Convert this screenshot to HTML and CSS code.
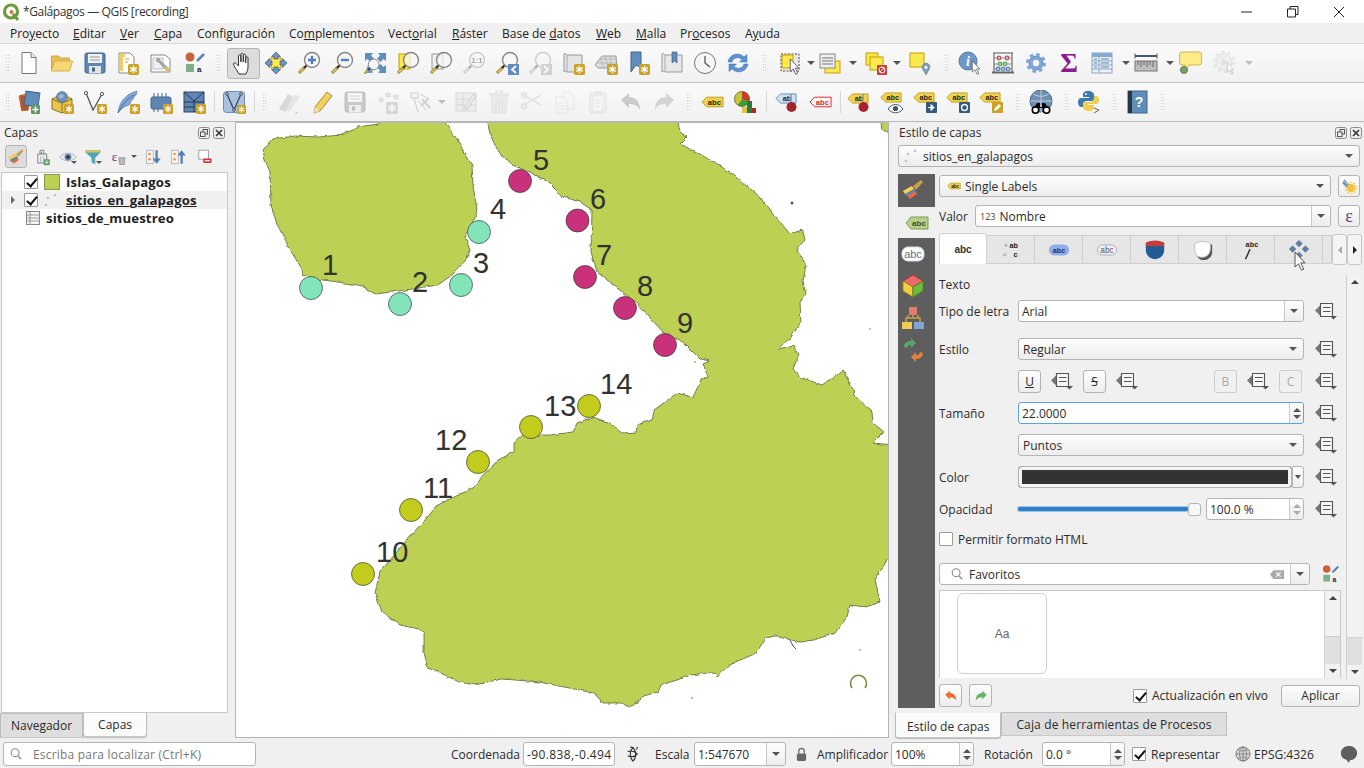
FILE: index.html
```html
<!DOCTYPE html>
<html>

<head>
  <meta charset="UTF-8">
  <title>*Galápagos — QGIS [recording]</title>
  <link rel="stylesheet" href="styles.css">
</head>

<body>
  <!-- iconos -->
  <svg class="sprite" xmlns="http://www.w3.org/2000/svg">
    <symbol id="star" viewBox="0 0 10 10"><rect width="10" height="10" rx="1.5" fill="#c9a227"/><path d="M5 1.5v7M2 3.2l6 3.6M8 3.2L2 6.8" stroke="#fff" stroke-width="1.3"/></symbol>
    <symbol id="mag" viewBox="0 0 24 24"><path d="M2 22l6-6" stroke="#8a7a2a" stroke-width="3"/><path d="M2.5 21.5l4-4" stroke="#f0d060" stroke-width="1.5"/><path d="M7.5 16.5l3-3" stroke="#222" stroke-width="2"/><circle cx="15" cy="9" r="7.5" fill="#f6f6f6" fill-opacity=".75" stroke="#888" stroke-width="1.4"/></symbol>
    <symbol id="cur" viewBox="0 0 12 20"><path d="M1 1v15l3.5-3.2 3 6.4 2.3-1-3-6.3H11z" fill="#fff" stroke="#555" stroke-width="1"/></symbol>
    <symbol id="tag" viewBox="0 0 24 12"><path d="M1 6l5-5h17v10H6z" fill="#f2d24a" stroke="#b99d22"/><text x="14" y="9" text-anchor="middle" class="ictext">abc</text></symbol>
    <symbol id="tagr" viewBox="0 0 24 12"><path d="M1 6l5-5h17v10H6z" fill="#fff" stroke="#d22"/><text x="14" y="9" text-anchor="middle" class="ictext" style="fill:#d22">abc</text></symbol>
    <symbol id="tagb" viewBox="0 0 24 12"><path d="M1 6l5-5h17v10H6z" fill="#cfe0f3" stroke="#5a8cc4"/><text x="13" y="9" text-anchor="middle" class="ictext">ab</text></symbol>
    <symbol id="tagy" viewBox="0 0 24 12"><path d="M1 6l5-5h17v10H6z" fill="#f2d24a" stroke="#b99d22"/><text x="13" y="9" text-anchor="middle" class="ictext">ab</text></symbol>

    <symbol id="i-new" viewBox="0 0 24 24"><path d="M5 1.5h9l5 5v16H5z" fill="#fff" stroke="#777"/><path d="M14 1.5v5h5" fill="#eee" stroke="#777"/></symbol>
    <symbol id="i-open" viewBox="0 0 24 24"><path d="M1.5 19V5h7l2 2h9v3" fill="#e7bd55" stroke="#d2a845"/><path d="M1.5 20l3-10h18l-3 10z" fill="#f7d773" stroke="#d9b04a"/></symbol>
    <symbol id="i-save" viewBox="0 0 24 24"><rect x="2" y="2" width="20" height="20" rx="2" fill="#5f86b3" stroke="#44658c"/><rect x="5" y="3" width="14" height="9" fill="#f2f2f2"/><path d="M7 6h10M7 9h10" stroke="#999"/><rect x="6" y="15" width="12" height="7" fill="#e4e4e4"/><rect x="9" y="16.5" width="3" height="4" fill="#44658c"/></symbol>
    <symbol id="i-layout" viewBox="0 0 24 24"><path d="M3 2h11l4 4v16H3z" fill="#fff" stroke="#888"/><path d="M3.5 3H9v3H7v14H3.500z" fill="#f0cf62"/><path d="M9 8h4M9 11h3" stroke="#c9a227"/><use href="#star" x="12" y="13" width="11" height="11"/></symbol>
    <symbol id="i-layoutm" viewBox="0 0 24 24"><path d="M2 4h14l5 4v13H2z" fill="#fff" stroke="#888"/><path d="M4 7h10v11H4z" fill="#eef2f7" stroke="#bbb"/><path d="M8 8c-1 2 0 3 2 3l8 9 2-2-9-8c0-2-1-3-3-2z" fill="#b9b9b9" stroke="#666" stroke-width=".7"/><path d="M15 17l4 4 2-2-3-3z" fill="#e6c04a"/></symbol>
    <symbol id="i-style" viewBox="0 0 24 24"><circle cx="8" cy="6" r="4.500" fill="#c8623a"/><rect x="4" y="13" width="8" height="8" fill="#7fb089"/><path d="M15 10l7-7" stroke="#5f86b3" stroke-width="2.600"/><text x="15" y="21" class="ictext" font-size="10" font-weight="400">a</text></symbol>
    <symbol id="i-hand" viewBox="0 0 24 24"><path d="M8 23C6 19 2.500 15 2.500 13c0-1.600 2-1.600 3 0L7.500 15V5c0-1.600 2.400-1.600 2.400 0v6-7.500c0-1.600 2.400-1.600 2.400 0V11V4.500c0-1.600 2.400-1.600 2.400 0V12V7c0-1.500 2.300-1.500 2.300 0v9c0 3-1 4-2 7z" fill="#fff" stroke="#333"/></symbol>
    <symbol id="i-pan" viewBox="0 0 24 24"><rect x="7" y="7" width="10" height="10" fill="#fce94f" stroke="#c4a000"/><g fill="#6d97c4" stroke="#415a75" stroke-width=".7"><path d="M12 1l4.500 4.500H14V8h-4V5.500H7.500z"/><path d="M12 23l4.500-4.500H14V16h-4v2.500H7.500z"/><path d="M1 12l4.500-4.500V10H8v4H5.500v2.500z"/><path d="M23 12l-4.500-4.500V10H16v4h2.500v2.500z"/></g></symbol>
    <symbol id="i-zin" viewBox="0 0 24 24"><use href="#mag" width="24" height="24"/><path d="M15 5v8M11 9h8" stroke="#4f81bd" stroke-width="2.400"/></symbol>
    <symbol id="i-zout" viewBox="0 0 24 24"><use href="#mag" width="24" height="24"/><path d="M11 9h8" stroke="#4f81bd" stroke-width="2.400"/></symbol>
    <symbol id="i-zfull" viewBox="0 0 24 24"><g fill="#5f8ebd"><path d="M2 2h8L8 4.500l3 3L7.500 11l-3-3L2 10z"/><path d="M23 2h-8l2 2.500-3 3 3.500 3.500 3-3L23 10z"/><path d="M23 22h-8l2-2.500-3-3 3.500-3.500 3 3L23 14z"/><path d="M5 14l3 3 1.500-1v6H2z" opacity=".9"/></g><use href="#mag" x="0" y="7" width="17" height="17"/></symbol>
    <symbol id="i-zsel" viewBox="0 0 24 24"><rect x="3" y="3" width="11" height="15" fill="#fce94f" stroke="#c4a000"/><use href="#mag" width="24" height="24"/></symbol>
    <symbol id="i-zlayer" viewBox="0 0 24 24"><rect x="3" y="3" width="11" height="15" fill="#eee" stroke="#999"/><use href="#mag" width="24" height="24"/></symbol>
    <symbol id="i-z11" viewBox="0 0 24 24"><use href="#mag" width="24" height="24"/><text x="15" y="12" text-anchor="middle" class="ictext" font-size="8">1:1</text></symbol>
    <symbol id="i-zlast" viewBox="0 0 24 24"><use href="#mag" width="24" height="24"/><rect x="13" y="13" width="11" height="11" fill="#5f8ebd"/><path d="M21 15l-4 3.500 4 3.500" fill="none" stroke="#fff" stroke-width="1.800"/></symbol>
    <symbol id="i-znext" viewBox="0 0 24 24"><use href="#mag" width="24" height="24"/><rect x="13" y="13" width="11" height="11" fill="#999"/><path d="M16 15l4 3.500-4 3.500" fill="none" stroke="#fff" stroke-width="1.800"/></symbol>
    <symbol id="i-map" viewBox="0 0 24 24"><path d="M3 3c2-1 2 0 3 1h15v17H6c-1-1-2-1-3 0z" fill="#e4e4e4" stroke="#999"/><path d="M6 4v17" stroke="#aaa"/><use href="#star" x="13" y="13" width="11" height="11"/></symbol>
    <symbol id="i-3d" viewBox="0 0 24 24"><path d="M1 14L8 5h14l1 12H4z" fill="#ddd" stroke="#999"/><path d="M6 8l4 8M11 6l3 10M16 6l2 10M3 12h19M6 8h16" stroke="#aaa" stroke-width=".7"/><use href="#star" x="13" y="13" width="11" height="11"/></symbol>
    <symbol id="i-bm" viewBox="0 0 24 24"><path d="M4 1h10v16l-5-3-5 7z" fill="#5f8ebd" stroke="#44658c"/><use href="#star" x="12" y="13" width="11" height="11"/></symbol>
    <symbol id="i-bms" viewBox="0 0 24 24"><path d="M2 3c2-1 2 0 3 1h17v17H5c-1-1-2-1-3 0z" fill="#e8e8e8" stroke="#999"/><path d="M5 4v17" stroke="#aaa"/><path d="M12 1h5v11l-2.500-2-2.500 2z" fill="#5f8ebd" stroke="#44658c" stroke-width=".7"/></symbol>
    <symbol id="i-clock" viewBox="0 0 24 24"><circle cx="12" cy="12" r="10.500" fill="#f6f6f6" stroke="#777"/><path d="M12 5v7l5 4" fill="none" stroke="#555" stroke-width="1.300"/></symbol>
    <symbol id="i-refresh" viewBox="0 0 24 24"><g fill="#5b94cf" stroke="#3e73ad" stroke-width=".5"><path d="M2 11C3 4 12 0 18 6l3-2.500V11h-7.500l2.500-2.500C12 5 7 7 6 11z"/><path d="M22 13c-1 7-10 11-16 5l-3 2.500V13h7.500L8 15.500c4 3.500 9 1.500 10-2.500z"/></g></symbol>
    <symbol id="i-select" viewBox="0 0 24 24"><rect x="3" y="3" width="18" height="17" fill="#e8e8e8" stroke="#444" stroke-dasharray="2 1.500"/><rect x="4" y="4" width="11" height="13" fill="#fce94f" stroke="#c4a000"/><use href="#cur" x="11" y="7" width="11" height="17"/></symbol>
    <symbol id="i-seltbl" viewBox="0 0 24 24"><rect x="8" y="10" width="15" height="12" fill="#fce94f" stroke="#c4a000"/><rect x="3" y="3" width="15" height="14" fill="#eee" stroke="#888"/><path d="M5 7h11M5 10h11M5 13h11" stroke="#777"/></symbol>
    <symbol id="i-desel" viewBox="0 0 24 24"><rect x="2" y="2" width="12" height="12" fill="#fce94f" stroke="#c4a000"/><rect x="6" y="6" width="13" height="13" fill="#fce94f" stroke="#c4a000"/><rect x="13" y="14" width="10" height="10" rx="1" fill="#d03a3a"/><circle cx="18" cy="19" r="3" fill="none" stroke="#fff"/><path d="M16 21l4-4" stroke="#fff"/></symbol>
    <symbol id="i-selloc" viewBox="0 0 24 24"><rect x="2" y="2" width="14" height="14" fill="#fce94f" stroke="#c4a000"/><path d="M18 24l-3.500-6a4 4 0 1 1 7 0z" fill="#7f9fb8" stroke="#5b7890" stroke-width=".5"/><circle cx="18" cy="16.500" r="1.400" fill="#fff"/></symbol>
    <symbol id="i-identify" viewBox="0 0 24 24"><circle cx="10" cy="10" r="9" fill="#6d97c4" stroke="#4f78a5"/><text x="10" y="15" text-anchor="middle" font-family="Liberation Serif, serif" font-size="14" font-style="italic" font-weight="700" fill="#fff">i</text><use href="#cur" x="13" y="9" width="10" height="15"/></symbol>
    <symbol id="i-calc" viewBox="0 0 24 24"><path d="M2 2h20M3 2v20M21 2v20" stroke="#555" fill="none"/><rect x="1" y="20.500" width="22" height="2" fill="#666"/><path d="M3 7h18M3 13h18M3 18h18" stroke="#777" stroke-width=".8"/><g fill="none" stroke-width="1.200"><g stroke="#c44"><circle cx="8" cy="7" r="1.800"/><circle cx="16" cy="7" r="1.800"/></g><g stroke="#5a5"><circle cx="9" cy="13" r="1.800"/><circle cx="14" cy="13" r="1.800"/></g><g stroke="#58b"><circle cx="7" cy="18" r="1.800"/><circle cx="12" cy="18" r="1.800"/><circle cx="17" cy="18" r="1.800"/></g></g></symbol>
    <symbol id="i-gear" viewBox="0 0 24 24"><circle cx="12" cy="12" r="7" fill="#7ea6d8" stroke="#6189bb"/><circle cx="12" cy="12" r="8.500" fill="none" stroke="#7ea6d8" stroke-width="3" stroke-dasharray="3.500 3.180"/><circle cx="12" cy="12" r="3.200" fill="#f4f4f4"/></symbol>
    <symbol id="i-table" viewBox="0 0 24 24"><rect x="2" y="2" width="20" height="20" fill="#eef3fa" stroke="#88a4c8"/><rect x="2" y="2" width="20" height="4" fill="#88a8d0"/><path d="M9 6v16M2 10h20M2 14h20M2 18h20" stroke="#88a4c8"/><path d="M4 8h3M11 8h8M4 12h3M11 12h8M4 16h3M11 16h8" stroke="#5f7fa5"/></symbol>
    <symbol id="i-ruler" viewBox="0 0 24 24"><path d="M1 5h22" stroke="#44586e" stroke-width="2"/><path d="M1 2.500v5M23 2.500v5" stroke="#44586e"/><rect x="1" y="10" width="22" height="10" fill="#bdbdbd" stroke="#777"/><path d="M4 10v4M7 10v6M10 10v4M13 10v6M16 10v4M19 10v6" stroke="#666"/></symbol>
    <symbol id="i-callout" viewBox="0 0 24 24"><path d="M4 1h17a2.500 2.500 0 0 1 2.500 2.500v8A2.500 2.500 0 0 1 21 14H11l-4 5v-5H4a2.500 2.500 0 0 1-2.500-2.500v-8A2.500 2.500 0 0 1 4 1z" fill="#fbec88" stroke="#cdb64e"/><circle cx="6" cy="19" r="3.500" fill="#7fa067" stroke="#5e7a4a"/></symbol>
    <symbol id="i-action" viewBox="0 0 24 24"><circle cx="11" cy="11" r="8" fill="#e3e3e3" stroke="#bbb"/><circle cx="11" cy="11" r="10" fill="none" stroke="#ccc" stroke-width="2.500" stroke-dasharray="3.500 2.800"/><path d="M8.500 7l6 4-6 4z" fill="#bbb"/><use href="#cur" x="13" y="11" width="9" height="13"/></symbol>

    <symbol id="i-dsm" viewBox="0 0 24 24"><path d="M2 6l7-2 3 15-7 2z" fill="#e8a33d" stroke="#b67a24"/><path d="M3 5l8 1v15l-7-1z" fill="#b5562f"/><rect x="8" y="2" width="14" height="14" transform="rotate(8 15 9)" fill="#5f8ebd" stroke="#44658c"/><rect x="14" y="15" width="9" height="9" rx="1" fill="#5e9a63"/><path d="M18.500 16.500v6M15.500 19.500h6" stroke="#fff" stroke-width="1.600"/></symbol>
    <symbol id="i-gpkg" viewBox="0 0 24 24"><path d="M2 9l10-5 10 5v10l-10 4-10-4z" fill="#e8c64e" stroke="#8a7320"/><path d="M2 9l10 4 10-4M12 13v10" stroke="#8a7320" fill="none"/><circle cx="12" cy="7" r="5.500" fill="#6d8fb8" stroke="#4f6f95" stroke-width=".6"/><path d="M8 6l3-2 3 1-1 3-3 1z" fill="#9fb7d2"/><use href="#star" x="14" y="14" width="10" height="10"/></symbol>
    <symbol id="i-v" viewBox="0 0 24 24"><path d="M3 3l7 17 9-16" fill="none" stroke="#555" stroke-width="1.300"/><g fill="#fff" stroke="#555"><circle cx="3" cy="3" r="1.600"/><circle cx="19" cy="4" r="1.600"/></g><use href="#star" x="14" y="14" width="10" height="10"/></symbol>
    <symbol id="i-feather" viewBox="0 0 24 24"><path d="M2 23C3 13 9 4 21 1c0 4-2 5-3 6 0 2-2 3-3 4 0 3-3 5-5 5-2 1-5 3-8 7z" fill="#7ea6d8" stroke="#5f7fa5" stroke-width=".7"/><path d="M2 23C6 15 11 9 18 5" stroke="#3f5f85" fill="none" stroke-width=".8"/><use href="#star" x="14" y="14" width="10" height="10"/></symbol>
    <symbol id="i-chip" viewBox="0 0 24 24"><rect x="2" y="7" width="20" height="12" rx="2" fill="#5f86b3" stroke="#44658c"/><path d="M5 3v4M9 3v4M13 3v4M17 3v4M5 19v3M9 19v3" stroke="#44658c"/><use href="#star" x="14" y="14" width="10" height="10"/></symbol>
    <symbol id="i-mesh" viewBox="0 0 24 24"><rect x="2" y="2" width="20" height="20" fill="#5f86b3" stroke="#2c4560"/><path d="M2 2l10 9 10-9M2 12h20M12 11v11M2 17h10" stroke="#20364d" fill="none"/><use href="#star" x="14" y="14" width="10" height="10"/></symbol>
    <symbol id="i-virt" viewBox="0 0 24 24"><rect x="1.500" y="1.500" width="21" height="21" rx="3" fill="#a9c1de" stroke="#6d8fb8"/><path d="M5 4l7 16 7-16" fill="none" stroke="#345" stroke-width="1.200"/><g fill="#fff" stroke="#345"><circle cx="5" cy="4" r="1.300"/><circle cx="19" cy="4" r="1.300"/><circle cx="12" cy="20" r="1.300"/></g><use href="#star" x="15" y="15" width="9" height="9"/></symbol>
    <symbol id="i-edits" viewBox="0 0 24 24"><path d="M8 22L2 19l9-15 7 4z" fill="#aaa"/><path d="M12 22l-3-2 9-16 5 3z" fill="#ccc"/><path d="M18 22l3 0-1.500 2z" fill="#888"/></symbol>
    <symbol id="i-pencil" viewBox="0 0 24 24"><path d="M5 17L17 2l5 4L10 21l-6 2z" fill="#f0d060" stroke="#a89030"/><path d="M4 23l1-6 5 4z" fill="#eadfc0"/></symbol>
    <symbol id="i-points" viewBox="0 0 24 24"><circle cx="5" cy="10" r="2.800" fill="#bbb"/><circle cx="12" cy="5" r="2.800" fill="#bbb"/><circle cx="20" cy="7" r="2.800" fill="#bbb"/><use href="#star" x="10" y="12" width="12" height="12"/></symbol>
    <symbol id="i-vertex" viewBox="0 0 24 24"><path d="M2 3h7v5H2zM5 8l4 14M9 10l8 10M11 4l7 4" fill="#eee" stroke="#888"/><path d="M12 16l8-8M13 9l8 9" stroke="#999" stroke-width="2"/></symbol>
    <symbol id="i-tbl" viewBox="0 0 24 24"><rect x="2" y="3" width="20" height="18" fill="#ddd" stroke="#aaa"/><path d="M2 9h20M2 15h20M9 3v18" stroke="#aaa"/><path d="M10 18l9-14 3 2-9 14z" fill="#ccc" stroke="#999"/></symbol>
    <symbol id="i-trash" viewBox="0 0 24 24"><rect x="2" y="3" width="20" height="3" fill="#ccc"/><path d="M9 3V1h6v2" fill="none" stroke="#ccc" stroke-width="1.500"/><path d="M4 7h16l-1.500 16h-13z" fill="#ddd" stroke="#bbb"/><path d="M9 9v12M12 9v12M15 9v12" stroke="#bbb"/></symbol>
    <symbol id="i-scis" viewBox="0 0 24 24"><path d="M2 4l19 11M2 16L21 5" stroke="#c4c4c4" stroke-width="1.800"/><circle cx="4" cy="5" r="2.600" fill="none" stroke="#c4c4c4" stroke-width="1.500"/><circle cx="4" cy="16" r="2.600" fill="none" stroke="#c4c4c4" stroke-width="1.500"/></symbol>
    <symbol id="i-copy" viewBox="0 0 24 24"><path d="M9 2h8l4 4v13H9z" fill="#f2f2f2" stroke="#ccc"/><path d="M3 7h8l3 3v13H3z" fill="#f7f7f7" stroke="#ccc"/><path d="M5 13h7M5 16h7M5 19h7" stroke="#ccc"/></symbol>
    <symbol id="i-paste" viewBox="0 0 24 24"><rect x="4" y="3" width="16" height="20" rx="1" fill="#e3e3e3" stroke="#c4c4c4"/><rect x="7" y="6" width="10" height="15" fill="#f7f7f7" stroke="#ccc"/><rect x="8" y="1" width="8" height="4" fill="#d2d2d2"/><path d="M9 10h6M9 13h6M9 16h6" stroke="#ccc"/></symbol>
    <symbol id="i-undo" viewBox="0 0 24 24"><path d="M2 10l8-7v4c6 0 11 4 11 13-2-4-5-6-11-6v4z" fill="#e86f2c"/></symbol>
    <symbol id="i-redo" viewBox="0 0 24 24"><path d="M22 10l-8-7v4C8 7 3 11 3 20c2-4 5-6 11-6v4z" fill="#69b26c"/></symbol>
    <symbol id="i-abc" viewBox="0 0 24 24"><use href="#tag" x="1" y="6" width="23" height="12"/></symbol>
    <symbol id="i-chart" viewBox="0 0 24 24"><circle cx="9" cy="9" r="7.500" fill="#c6c631" stroke="#333" stroke-width=".6"/><path d="M9 9V1.500A7.500 7.500 0 0 1 16 12z" fill="#c63f2b"/><path d="M9 9l7 3a7.500 7.500 0 0 1-11 3z" fill="#3f9a44"/><rect x="9" y="17" width="5" height="6" fill="#e2c241"/><rect x="14" y="11" width="5" height="12" fill="#2f7a33"/><rect x="19" y="18" width="4" height="5" fill="#b02b20"/></symbol>
    <symbol id="i-abpin" viewBox="0 0 24 24"><use href="#tagb" x="0" y="3" width="22" height="11"/><path d="M16 4v10" stroke="#999" stroke-width="1.600"/><circle cx="16.500" cy="17" r="5" fill="#a5242b"/></symbol>
    <symbol id="i-abcred" viewBox="0 0 24 24"><use href="#tagr" x="1" y="6" width="23" height="12"/></symbol>
    <symbol id="i-abpin2" viewBox="0 0 24 24"><use href="#tagy" x="0" y="3" width="22" height="11"/><path d="M16 4v10" stroke="#999" stroke-width="1.600"/><circle cx="16.500" cy="17" r="5" fill="#a5242b"/></symbol>
    <symbol id="i-abceye" viewBox="0 0 24 24"><use href="#tag" x="0" y="2" width="22" height="11"/><path d="M8 19c4-6 11-6 15 0-4 5-11 5-15 0z" fill="#fff" stroke="#456"/><circle cx="15.500" cy="18.500" r="2.600" fill="#456"/></symbol>
    <symbol id="i-abcmove" viewBox="0 0 24 24"><use href="#tag" x="0" y="2" width="22" height="11"/><rect x="13" y="12" width="11" height="11" rx="1" fill="#345a78"/><path d="M15 17.500h4M18 14.500l3 3-3 3z" stroke="#fff" fill="#fff"/></symbol>
    <symbol id="i-abcrot" viewBox="0 0 24 24"><use href="#tag" x="0" y="2" width="22" height="11"/><rect x="13" y="12" width="11" height="11" rx="1" fill="#345a78"/><circle cx="18.500" cy="17.500" r="3" fill="none" stroke="#fff" stroke-width="1.300"/></symbol>
    <symbol id="i-abcedit" viewBox="0 0 24 24"><use href="#tag" x="0" y="2" width="22" height="11"/><rect x="13" y="12" width="11" height="11" rx="1" fill="#c9a227"/><path d="M15 21l1-3 4-4 2 2-4 4z" fill="#fff"/></symbol>
    <symbol id="i-globe" viewBox="0 0 24 24"><circle cx="12" cy="11" r="11" fill="#6d8fb0" stroke="#4a6a88"/><path d="M1 11h22M12 0v22M4 4c5 3 11 3 16 0M4 18c5-3 11-3 16 0" stroke="#cfdbe6" fill="none" stroke-width=".8"/><circle cx="6.500" cy="20" r="3.200" fill="#fff" stroke="#000" stroke-width="1.600"/><circle cx="17.500" cy="20" r="3.200" fill="#fff" stroke="#000" stroke-width="1.600"/><path d="M5 18l3-5h3v4h2v-4h3l3 5z" fill="#000"/></symbol>
    <symbol id="i-python" viewBox="0 0 24 24"><path d="M11 1C7 1 6 3 6 5v2h6v1H4C2 8 1 10 1 12s1 5 3 5h2v-3c0-2 2-3 4-3h5c1 0 2-1 2-3V5c0-2-2-4-6-4z" fill="#3f79ad"/><circle cx="9" cy="4" r="1" fill="#fff"/><path d="M12 21c4 0 5-2 5-4v-2h-6v-1h8c2 0 3-2 3-4s-1-4-3-4h-2v3c0 2-2 3-4 3H8c-1 0-2 1-2 3v2c0 2 2 4 6 4z" fill="#f1cf4e"/><path d="M17 18l5 2-5 3" fill="none" stroke="#666"/></symbol>
    <symbol id="i-help" viewBox="0 0 24 24"><rect x="3" y="1" width="19" height="22" fill="#5f8ebd" stroke="#44658c"/><rect x="3" y="1" width="4" height="22" fill="#2a3644"/><text x="14" y="17" text-anchor="middle" font-family="Liberation Sans, sans-serif" font-weight="700" font-size="14" fill="#fff">?</text></symbol>

    <symbol id="i-brush" viewBox="0 0 24 24"><path d="M2 13l9-5 5 8-7 5z" fill="#ec6a3a"/><path d="M2 13l9-5 2 3-9 5z" fill="#f7d44f"/><path d="M4 16l9-5 1.500 2.500-9 5z" fill="#5f86b3"/><path d="M12 8l8-6 2 2-7 8z" fill="#caa04e"/></symbol>
    <symbol id="i-lbl" viewBox="0 0 24 24"><path d="M1 12l5-6h17v12H6z" fill="#b6cf8b" stroke="#7c9a54"/><text x="14" y="15" text-anchor="middle" class="ictext" style="fill:#3b4e22">abc</text></symbol>
    <symbol id="i-buf" viewBox="0 0 24 24"><rect x="1" y="5" width="22" height="14" rx="6" fill="#fff" stroke="#ddd"/><text x="12" y="16" text-anchor="middle" font-family="Liberation Sans, sans-serif" font-size="11" fill="#5c6f8a">abc</text></symbol>
    <symbol id="i-cube" viewBox="0 0 24 24"><path d="M12 1l10 6-10 6L2 7z" fill="#ee6a6a" stroke="#a33"/><path d="M2 7l10 6v10L2 17z" fill="#f0d040" stroke="#9a8420"/><path d="M22 7l-10 6v10l10-6z" fill="#6fb93f" stroke="#4a8526"/></symbol>
    <symbol id="i-rules" viewBox="0 0 24 24"><rect x="8" y="1" width="8" height="8" fill="#e07b70"/><path d="M5 16v-4h14v4M12 9v3M7 9v3M17 9v3" fill="none" stroke="#c9a24a" stroke-width="1.500"/><rect x="1" y="16" width="10" height="7" fill="#f0ca52"/><rect x="13" y="16" width="10" height="7" fill="#7ea6d8"/></symbol>
    <symbol id="i-hist" viewBox="0 0 24 24"><path d="M3 9c0-4 3-6 7-6V0l5 5-5 5V7c-2 0-3 0-4 3z" fill="#5ea46a"/><path d="M22 15c0 4-3 6-7 6v3l-5-5 5-5v3c2 0 3 0 4-3z" fill="#e27d3d"/></symbol>
    <symbol id="i-dd" viewBox="0 0 22 18"><path d="M0 8.500l6-6v12z" fill="#777"/><path d="M5.500 1.500h12v13h-12z" fill="#f7f7f7" stroke="#555" stroke-width="1.100"/><path d="M8 5.500h7.500M8 9.500h7.500" stroke="#555" stroke-width="1.200"/><path d="M15 14h7l-3.500 3.500z" fill="#555"/></symbol>
    <symbol id="i-float" viewBox="0 0 12 12"><rect x=".5" y=".5" width="11" height="11" rx="2" fill="#eee" stroke="#888"/><rect x="5" y="2.500" width="4.500" height="4.500" fill="none" stroke="#555"/><rect x="2.500" y="5" width="4.500" height="4.500" fill="#eee" stroke="#555"/></symbol>
    <symbol id="i-close" viewBox="0 0 12 12"><rect x=".5" y=".5" width="11" height="11" rx="2" fill="#eee" stroke="#888"/><path d="M3 3l6 6M9 3L3 9" stroke="#333" stroke-width="1.600"/></symbol>
    <symbol id="i-pts" viewBox="0 0 16 16"><circle cx="2" cy="13" r="1.300" fill="#b7c3cf"/><circle cx="4" cy="6" r="1.300" fill="#b7c3cf"/><circle cx="11" cy="3" r="1.300" fill="#b7c3cf"/></symbol>
    <symbol id="i-filter" viewBox="0 0 24 24"><path d="M2 3h20v3l-7 7v9l-5-3v-6L2 6z" fill="#55a6b5"/><path d="M2 3h20v3H2z" fill="#d8c25a"/></symbol>
    <symbol id="i-eye" viewBox="0 0 24 24"><path d="M1 12c5-7 17-7 22 0-5 7-17 7-22 0z" fill="#e4e8ec" stroke="#aab"/><circle cx="12" cy="12" r="4.500" fill="#5f7f9f"/><circle cx="12" cy="12" r="2" fill="#223"/></symbol>
    <symbol id="i-group" viewBox="0 0 24 24"><path d="M5 8h12v12H5zM8 8V3h5v5M10 8V5" fill="none" stroke="#777" stroke-width="1.200"/><path d="M9 11v8M13 11v8" stroke="#999"/><rect x="13" y="15" width="8" height="8" rx="1" fill="#5e9a63"/><path d="M17 16.500v5M14.500 19h5" stroke="#fff"/></symbol>
    <symbol id="i-expand" viewBox="0 0 24 24"><rect x="2" y="3" width="9" height="18" fill="#f4f4f4" stroke="#aaa"/><circle cx="6" cy="8" r="1.800" fill="#e59a3c"/><circle cx="6" cy="15" r="1.800" fill="#e59a3c"/><path d="M17 3v11h4l-5.500 7L10 14h4V3z" fill="#4f7fb5"/></symbol>
    <symbol id="i-collapse" viewBox="0 0 24 24"><rect x="2" y="3" width="9" height="18" fill="#f4f4f4" stroke="#aaa"/><circle cx="6" cy="8" r="1.800" fill="#e59a3c"/><circle cx="6" cy="15" r="1.800" fill="#e59a3c"/><path d="M17 21V10h4L15.500 3 10 10h4v11z" fill="#4f7fb5"/></symbol>
    <symbol id="i-remove" viewBox="0 0 24 24"><path d="M5 3h13v12H5z" fill="#fff" stroke="#888"/><rect x="11" y="14" width="11" height="6" rx="1" fill="#d03a3a"/><path d="M13 17h7" stroke="#fff" stroke-width="1.600"/></symbol>
    <symbol id="i-eps" viewBox="0 0 24 24"><text x="6" y="17" text-anchor="middle" font-family="Liberation Serif, serif" font-size="18" fill="#6a3d7c">ε</text><path d="M12 13h8l-1 9h-6z" fill="#bbb" stroke="#888"/></symbol>
    <symbol id="i-gearo" viewBox="0 0 24 24"><path d="M5 2l9 9-4 5-8-8z" fill="#6d8fb8"/><path d="M4 4l5 5M7 3l5 5" stroke="#fff"/><circle cx="15" cy="15" r="6" fill="#f2c53d"/><circle cx="15" cy="15" r="8" fill="none" stroke="#f2c53d" stroke-width="2" stroke-dasharray="2.500 2.500"/></symbol>
    <symbol id="i-tabfmt" viewBox="0 0 24 24"><text x="15" y="10" text-anchor="middle" class="ictext">ab</text><text x="4" y="10" class="ictext" style="fill:#888;font-weight:400">+</text><text x="3" y="20" class="ictext" style="fill:#888;font-weight:400">&lt;</text><text x="17" y="20" text-anchor="middle" class="ictext">c</text></symbol>
    <symbol id="i-tabbuf" viewBox="0 0 24 24"><rect x="1" y="6" width="22" height="12" rx="6" fill="#8fadec"/><text x="12" y="15.500" text-anchor="middle" class="ictext" style="fill:#334">abc</text></symbol>
    <symbol id="i-tabbg" viewBox="0 0 24 24"><rect x="1.500" y="6.500" width="21" height="11" rx="5.500" fill="#eef0f6" stroke="#aab"/><text x="12" y="15.500" text-anchor="middle" font-family="Liberation Sans, sans-serif" font-size="9" fill="#556">abc</text></symbol>
    <symbol id="i-tabsh" viewBox="0 0 24 24"><path d="M2 4h20v8c0 6-5 10-10 10S2 18 2 12z" fill="#1f5b94"/><path d="M2 4c6-3 14-3 20 0v4H2z" fill="#c23c3c"/></symbol>
    <symbol id="i-tabshd" viewBox="0 0 24 24"><path d="M5 6h17v8c0 5-4 9-9 9s-8-3-8-8z" fill="#555"/><path d="M3 5c5-3 12-3 17 0v6c0 5-4 9-9 9s-8-3-8-8z" fill="#fff" stroke="#bbc"/></symbol>
    <symbol id="i-tabcl" viewBox="0 0 24 24"><text x="13" y="9" text-anchor="middle" class="ictext">abc</text><path d="M11 11l-5 11" stroke="#333" stroke-width="1.600"/></symbol>
    <symbol id="i-tabpl" viewBox="0 0 24 24"><g fill="#5f7f9f"><path d="M12 1l4 4-4 4-4-4z"/><path d="M5 7l4 4-4 4-4-4z"/><path d="M19 7l4 4-4 4-4-4z"/><path d="M12 14l4 4-4 4-4-4z"/></g></symbol>
    <symbol id="i-search" viewBox="0 0 16 16"><circle cx="7" cy="6.500" r="4.500" fill="none" stroke="#888" stroke-width="1.200"/><path d="M10 10l4 4" stroke="#888" stroke-width="1.400"/></symbol>
    <symbol id="i-clear" viewBox="0 0 16 12"><path d="M0 6l4-5h12v10H4z" fill="#aaa"/><path d="M7 3.500l5 5M12 3.500l-5 5" stroke="#fff" stroke-width="1.400"/></symbol>
    <symbol id="i-crs" viewBox="0 0 16 16"><circle cx="8" cy="8" r="7" fill="#ddd" stroke="#777"/><path d="M1 8h14M8 1v14M3 3.500c3 2 7 2 10 0M3 12.500c3-2 7-2 10 0" stroke="#777" fill="none" stroke-width=".8"/><ellipse cx="8" cy="8" rx="3.500" ry="7" fill="none" stroke="#777" stroke-width=".8"/></symbol>
    <symbol id="i-msg" viewBox="0 0 20 20"><path d="M10 1c5 0 9 3 9 8s-4 8-8 8l-1 3-3-3.500C3 15.500 1 13 1 9c0-5 4-8 9-8z" fill="#5f5f5f"/></symbol>
    <symbol id="i-lock" viewBox="0 0 14 16"><path d="M4 7V4.500a3 3 0 0 1 6 0V7" fill="none" stroke="#777" stroke-width="1.500"/><rect x="2" y="7" width="10" height="8" rx="1.500" fill="#666"/></symbol>
    <symbol id="i-mute" viewBox="0 0 18 20"><path d="M6 2c4 1 6 4 6 8s-1 6-3 8c-2-2-3-4-3-8s1-6 4-7M3 7c4-1 8 0 11 3M3 12c4 2 8 1 11-2M14 2l-1 3" fill="none" stroke="#333" stroke-width="1.300"/></symbol>
  </svg>

  <div class="window">
    <div class="titlebar">
      <svg class="app-logo" viewBox="0 0 18 18"><circle cx="9" cy="8.500" r="6.500" fill="none" stroke="#6a9b3d" stroke-width="3.200"/><path d="M11 11l5 6" stroke="#6a9b3d" stroke-width="3"/><circle cx="9.500" cy="9" r="2" fill="#e2703a"/></svg>
      <span class="app-title">*Galápagos — QGIS [recording]</span>
      <span class="win-btns">
        <svg viewBox="0 0 12 12"><path d="M0 6h11" stroke="#222"/></svg>
        <svg viewBox="0 0 12 12"><path d="M.5 3h8v8h-8zM3 3V.5h8v8H8.500" fill="none" stroke="#222"/></svg>
        <svg viewBox="0 0 12 12"><path d="M1 1l10 10M11 1L1 11" stroke="#222"/></svg>
      </span>
    </div>

    <div class="menubar">
      <span class="m1">Pro<u>y</u>ecto</span>
      <span class="m2"><u>E</u>ditar</span>
      <span class="m3"><u>V</u>er</span>
      <span class="m4"><u>C</u>apa</span>
      <span class="m5">Confi<u>g</u>uración</span>
      <span class="m6">Co<u>m</u>plementos</span>
      <span class="m7">Vect<u>o</u>rial</span>
      <span class="m8"><u>R</u>áster</span>
      <span class="m9">Base de <u>d</u>atos</span>
      <span class="m10"><u>W</u>eb</span>
      <span class="m11"><u>M</u>alla</span>
      <span class="m12">Pr<u>o</u>cesos</span>
      <span class="m13">A<u>y</u>uda</span>
    </div>

    <div class="toolbar">
      <span class="grip g0"></span>
      <span class="ti"><svg><use href="#i-new"/></svg></span>
      <span class="ti"><svg><use href="#i-open"/></svg></span>
      <span class="ti"><svg><use href="#i-save"/></svg></span>
      <span class="ti"><svg><use href="#i-layout"/></svg></span>
      <span class="ti"><svg><use href="#i-layoutm"/></svg></span>
      <span class="ti"><svg><use href="#i-style"/></svg></span>
      <span class="grip g1"></span>
      <span class="ti on"><svg><use href="#i-hand"/></svg></span>
      <span class="ti"><svg><use href="#i-pan"/></svg></span>
      <span class="ti"><svg><use href="#i-zin"/></svg></span>
      <span class="ti"><svg><use href="#i-zout"/></svg></span>
      <span class="ti"><svg><use href="#i-zfull"/></svg></span>
      <span class="ti"><svg><use href="#i-zsel"/></svg></span>
      <span class="ti"><svg><use href="#i-zlayer"/></svg></span>
      <span class="ti off"><svg><use href="#i-z11"/></svg></span>
      <span class="ti"><svg><use href="#i-zlast"/></svg></span>
      <span class="ti off"><svg><use href="#i-znext"/></svg></span>
      <span class="ti"><svg><use href="#i-map"/></svg></span>
      <span class="ti"><svg><use href="#i-3d"/></svg></span>
      <span class="ti"><svg><use href="#i-bm"/></svg></span>
      <span class="ti"><svg><use href="#i-bms"/></svg></span>
      <span class="ti"><svg><use href="#i-clock"/></svg></span>
      <span class="ti"><svg><use href="#i-refresh"/></svg></span>
      <span class="grip g2"></span>
      <span class="ti w39"><svg><use href="#i-select"/></svg><i class="arrow"></i></span>
      <span class="ti w47"><svg><use href="#i-seltbl"/></svg><i class="arrow"></i></span>
      <span class="ti w44"><svg><use href="#i-desel"/></svg><i class="arrow"></i></span>
      <span class="ti"><svg><use href="#i-selloc"/></svg></span>
      <span class="grip g3"></span>
      <span class="ti"><svg><use href="#i-identify"/></svg></span>
      <span class="ti"><svg><use href="#i-calc"/></svg></span>
      <span class="ti"><svg><use href="#i-gear"/></svg></span>
      <span class="ti sigma">Σ</span>
      <span class="ti w44b"><svg><use href="#i-table"/></svg><i class="arrow"></i></span>
      <span class="ti w44b"><svg><use href="#i-ruler"/></svg><i class="arrow"></i></span>
      <span class="ti"><svg><use href="#i-callout"/></svg></span>
      <span class="ti off w44c"><svg><use href="#i-action"/></svg><i class="arrow"></i></span>
    </div>

    <div class="toolbar second">
      <span class="grip g0"></span>
      <span class="ti"><svg><use href="#i-dsm"/></svg></span>
      <span class="ti"><svg><use href="#i-gpkg"/></svg></span>
      <span class="ti"><svg><use href="#i-v"/></svg></span>
      <span class="ti"><svg><use href="#i-feather"/></svg></span>
      <span class="ti"><svg><use href="#i-chip"/></svg></span>
      <span class="ti"><svg><use href="#i-mesh"/></svg></span>
      <span class="vline v1"></span>
      <span class="ti"><svg><use href="#i-virt"/></svg></span>
      <span class="vline v2"></span>
      <span class="grip g4"></span>
      <span class="ti off"><svg><use href="#i-edits"/></svg></span>
      <span class="ti"><svg><use href="#i-pencil"/></svg></span>
      <span class="ti off"><svg><use href="#i-save"/></svg></span>
      <span class="ti off"><svg><use href="#i-points"/></svg></span>
      <span class="ti off w45"><svg><use href="#i-vertex"/></svg><i class="arrow"></i></span>
      <span class="ti off"><svg><use href="#i-tbl"/></svg></span>
      <span class="ti off"><svg><use href="#i-trash"/></svg></span>
      <span class="ti off"><svg><use href="#i-scis"/></svg></span>
      <span class="ti off"><svg><use href="#i-copy"/></svg></span>
      <span class="ti off"><svg><use href="#i-paste"/></svg></span>
      <span class="ti off"><svg><use href="#i-undo"/></svg></span>
      <span class="ti off"><svg><use href="#i-redo"/></svg></span>
      <span class="grip g5"></span>
      <span class="ti"><svg><use href="#i-abc"/></svg></span>
      <span class="ti"><svg><use href="#i-chart"/></svg></span>
      <span class="vline v3"></span>
      <span class="ti"><svg><use href="#i-abpin"/></svg></span>
      <span class="ti"><svg><use href="#i-abcred"/></svg></span>
      <span class="vline v4"></span>
      <span class="ti"><svg><use href="#i-abpin2"/></svg></span>
      <span class="ti"><svg><use href="#i-abceye"/></svg></span>
      <span class="ti"><svg><use href="#i-abcmove"/></svg></span>
      <span class="ti"><svg><use href="#i-abcrot"/></svg></span>
      <span class="ti"><svg><use href="#i-abcedit"/></svg></span>
      <span class="grip g7"></span>
      <span class="ti"><svg><use href="#i-globe"/></svg></span>
      <span class="grip g6"></span>
      <span class="ti"><svg><use href="#i-python"/></svg></span>
      <span class="grip g6"></span>
      <span class="ti"><svg><use href="#i-help"/></svg></span>
      <span class="grip g6"></span>
    </div>

    <div class="main">
      <!-- panel capas -->
      <div class="left-panel">
        <div class="dock-head">
          <span>Capas</span>
          <span class="dock-btns"><svg><use href="#i-float"/></svg><svg><use href="#i-close"/></svg></span>
        </div>
        <div class="layers-tools">
          <span class="lt on"><svg><use href="#i-brush"/></svg></span>
          <span class="lt"><svg><use href="#i-group"/></svg></span>
          <span class="lt"><svg><use href="#i-eye"/></svg><i class="arrow tiny"></i></span>
          <span class="lt"><svg><use href="#i-filter"/></svg><i class="arrow tiny"></i></span>
          <span class="lt wide"><svg><use href="#i-eps"/></svg><i class="arrow"></i></span>
          <span class="lt"><svg><use href="#i-expand"/></svg></span>
          <span class="lt"><svg><use href="#i-collapse"/></svg></span>
          <span class="lt"><svg><use href="#i-remove"/></svg></span>
        </div>
        <div class="tree">
          <div class="tree-row">
            <span class="tw"></span><span class="check checked"></span>
            <span class="swatch"></span><b>Islas_Galapagos</b>
          </div>
          <div class="tree-row sel">
            <span class="tw"><i class="tri-right"></i></span><span class="check checked"></span>
            <svg class="pts"><use href="#i-pts"/></svg><b class="cur">sitios_en_galapagos</b>
          </div>
          <div class="tree-row">
            <span class="tw"></span>
            <svg class="tbl-ic" viewBox="0 0 14 14"><rect x=".5" y=".5" width="13" height="13" fill="#f4f4f4" stroke="#888"/><path d="M.5 4h13M.5 7h13M.5 10h13M4 1v13" stroke="#999"/></svg>
            <b>sitios_de_muestreo</b>
          </div>
        </div>
        <div class="dock-tabs">
          <span class="dock-tab">Navegador</span>
          <span class="dock-tab active">Capas</span>
        </div>
      </div>

      <div class="split-l"></div>

      <!-- mapa -->
      <div class="map">
        <svg viewBox="235 122 654 616" width="654" height="616">
          <defs>
            <filter id="rough" x="-2%" y="-2%" width="104%" height="104%">
              <feTurbulence type="fractalNoise" baseFrequency=".16" numOctaves="2" seed="3"/>
              <feDisplacementMap in="SourceGraphic" scale="3.500" xChannelSelector="R" yChannelSelector="G"/>
            </filter>
          </defs>
          <rect x="235" y="122" width="654" height="616" fill="#fff"/>
          <g class="land" filter="url(#rough)">
            <path d="M378 118L378 124 358 127 342 135 318 137 295 136 272 139 263 150 265 160 270 172 271 205 277 224 290 250 302 269 303 275 315 279 345 283 362 286 375 294 392 292 412 289 438 285 452 275 467 259 470 250 465 237 473 225 477 210 473 185 472 165 465 155 462 148 457 139 442 118z"/>
            <path d="M487 118L490 134 498 152 512 165 530 172 548 182 563 197 580 202 592 210 591 252 597 272 637 304 665 334 683 342 690 349 700 359 710 361 703 364 708 377 701 380 693 397 677 393 654 410 652 420 638 425 636 432 622 433 607 422 593 417 577 423 573 432 550 435 522 435 514 442 514 452 498 460 484 475 473 488 452 498 436 506 431 513 405 542 380 572 375 593 382 612 400 625 419 629 424 632 424 653 428 668 445 675 459 682 475 685 501 679 515 680 540 682 579 690 594 693 603 703 621 703 629 707 638 703 640 697 658 692 661 685 677 680 691 675 715 672 717 677 733 663 757 653 766 638 775 636 800 642 814 640 835 633 847 617 850 605 866 607 880 602 875 580 886 562 894 543 894 445 873 443 884 432 873 423 872 412 854 395 853 389 843 371 822 385 800 377 793 369 799 354 793 346 777 349 790 339 801 322 800 302 806 294 803 282 806 265 797 250 805 239 802 230 790 234 760 197 730 172 700 154 680 144 687 137 680 132 677 118z"/>
            <path d="M880 118L882 129 894 136 894 118z"/>
          </g>
          <g class="specks">
            <circle cx="792" cy="203" r="1.500"/><circle cx="870" cy="329" r=".7"/><circle cx="695" cy="362" r=".7"/><circle cx="860" cy="650" r=".7"/><circle cx="692" cy="698" r=".8"/><path d="M790 640l3 6 3 3" fill="none" stroke="#555"/>
          </g>
          <g class="pt-a">
            <circle cx="311" cy="288" r="11.500"/><circle cx="400" cy="304" r="11.500"/><circle cx="461" cy="285" r="11.500"/><circle cx="479" cy="232" r="11.500"/>
          </g>
          <g class="pt-b">
            <circle cx="520" cy="181" r="11.500"/><circle cx="577.500" cy="220.500" r="11.500"/><circle cx="585" cy="277" r="11.500"/><circle cx="625" cy="308" r="11.500"/><circle cx="665" cy="345" r="11.500"/>
          </g>
          <g class="pt-c">
            <circle cx="363" cy="574" r="11.500"/><circle cx="411" cy="510" r="11.500"/><circle cx="478" cy="462" r="11.500"/><circle cx="531" cy="427" r="11.500"/><circle cx="589" cy="406" r="11.500"/>
          </g>
          <g class="map-labels">
            <text x="322" y="275">1</text><text x="412" y="292">2</text><text x="473" y="273">3</text><text x="490" y="219">4</text><text x="533" y="170">5</text><text x="590" y="209">6</text><text x="596" y="265">7</text><text x="637" y="296">8</text><text x="677" y="333">9</text>
            <text x="376" y="562">10</text><text x="423" y="498">11</text><text x="435" y="450">12</text><text x="544" y="416">13</text><text x="600" y="394">14</text>
          </g>
          <path d="M852 688a8 8 0 1 1 13 0" fill="none" stroke="#7b8a3a" stroke-width="1.500"/>
          <rect x="235.500" y="122.500" width="653" height="615" fill="none" stroke="#b4b4b4"/>
        </svg>
      </div>

      <div class="split-r"></div>

      <!-- panel estilo -->
      <div class="right-panel">
        <div class="dock-head">
          <span>Estilo de capas</span>
          <span class="dock-btns"><svg><use href="#i-float"/></svg><svg><use href="#i-close"/></svg></span>
        </div>
        <div class="combo layer-combo"><svg class="pts"><use href="#i-pts"/></svg><span class="grow">sitios_en_galapagos</span><i class="arrow"></i></div>

        <div class="style-body">
          <div class="strip">
            <span class="strip-item"><svg><use href="#i-brush"/></svg></span>
            <span class="strip-item active"><svg><use href="#i-lbl"/></svg></span>
            <span class="strip-item"><svg><use href="#i-buf"/></svg></span>
            <span class="strip-item"><svg><use href="#i-cube"/></svg></span>
            <span class="strip-item"><svg><use href="#i-rules"/></svg></span>
            <span class="strip-item"><svg><use href="#i-hist"/></svg></span>
          </div>

          <div class="style-content">
            <div class="top-row">
              <div class="combo grow"><svg class="mini-tag"><use href="#tag"/></svg><span class="grow">Single Labels</span><i class="arrow"></i></div>
              <span class="btn square"><svg class="ic16"><use href="#i-gearo"/></svg></span>
            </div>
            <div class="top-row">
              <span class="lbl-valor">Valor</span>
              <div class="field grow"><small class="num">123</small><span class="grow">Nombre</span><span class="drop"><i class="arrow"></i></span></div>
              <span class="btn square eps">ε</span>
            </div>

            <div class="tabs">
              <span class="tab active"><b class="tab-abc">abc</b></span>
              <span class="tab"><svg><use href="#i-tabfmt"/></svg></span>
              <span class="tab"><svg><use href="#i-tabbuf"/></svg></span>
              <span class="tab"><svg><use href="#i-tabbg"/></svg></span>
              <span class="tab"><svg><use href="#i-tabsh"/></svg></span>
              <span class="tab"><svg><use href="#i-tabshd"/></svg></span>
              <span class="tab"><svg><use href="#i-tabcl"/></svg></span>
              <span class="tab"><svg><use href="#i-tabpl"/></svg></span>
              <span class="tab stub"></span>
              <span class="tab-scroll"><i class="tri-left"></i></span>
              <span class="tab-scroll"><i class="tri-right dark"></i></span>
              <svg class="pointer" viewBox="0 0 12 20"><use href="#cur"/></svg>
            </div>

            <div class="scroll-area">
              <div class="form">
                <div class="sec-title">Texto</div>
                <div class="row first">
                  <label>Tipo de letra</label>
                  <div class="field"><span class="grow">Arial</span><span class="drop"><i class="arrow"></i></span></div>
                  <svg class="dd"><use href="#i-dd"/></svg>
                </div>
                <div class="row">
                  <label>Estilo</label>
                  <div class="combo"><span class="grow">Regular</span><i class="arrow"></i></div>
                  <svg class="dd"><use href="#i-dd"/></svg>
                </div>
                <div class="row">
                  <label></label>
                  <div class="font-btns">
                    <span class="btn fb"><u>U</u></span><svg class="dd"><use href="#i-dd"/></svg>
                    <span class="btn fb"><s>S</s></span><svg class="dd"><use href="#i-dd"/></svg>
                    <span class="btn fb off second-group">B</span><svg class="dd"><use href="#i-dd"/></svg>
                    <span class="btn fb off">C</span>
                  </div>
                  <svg class="dd"><use href="#i-dd"/></svg>
                </div>
                <div class="row">
                  <label>Tamaño</label>
                  <div class="field focus"><span class="grow">22.0000</span><span class="spin"><i class="up"></i><i class="down"></i></span></div>
                  <svg class="dd"><use href="#i-dd"/></svg>
                </div>
                <div class="row">
                  <label></label>
                  <div class="combo"><span class="grow">Puntos</span><i class="arrow"></i></div>
                  <svg class="dd"><use href="#i-dd"/></svg>
                </div>
                <div class="row">
                  <label>Color</label>
                  <div class="color-btn"><span class="color-fill"></span><span class="color-drop"><i class="arrow"></i></span></div>
                  <svg class="dd"><use href="#i-dd"/></svg>
                </div>
                <div class="row">
                  <label>Opacidad</label>
                  <div class="opacity">
                    <span class="slider"><span class="slider-line"></span><span class="slider-knob"></span></span>
                    <div class="field spinbox"><span class="grow">100.0 %</span><span class="spin"><i class="up"></i><i class="down"></i></span></div>
                  </div>
                  <svg class="dd"><use href="#i-dd"/></svg>
                </div>
                <div class="html-row"><span class="check"></span><span>Permitir formato HTML</span></div>
                <div class="fav-row">
                  <div class="field fav"><svg class="ic14"><use href="#i-search"/></svg><span class="grow">Favoritos</span><svg class="clear"><use href="#i-clear"/></svg><span class="drop"><i class="arrow"></i></span></div>
                  <svg class="ic20"><use href="#i-style"/></svg>
                </div>
                <div class="fav-list">
                  <div class="fav-items">
                    <div class="card">Aa</div>
                  </div>
                  <div class="vscroll small"><span class="sb-btn"><i class="up"></i></span><span class="sb-track"><span class="sb-thumb"></span></span><span class="sb-btn"><i class="down"></i></span></div>
                </div>
              </div>
              <div class="vscroll"><span class="sb-btn"><i class="up"></i></span><span class="sb-track"><span class="sb-thumb"></span></span><span class="sb-btn"><i class="down"></i></span></div>
            </div>

            <div class="footer-row">
              <span class="btn hist"><svg class="ic16"><use href="#i-undo"/></svg></span>
              <span class="btn hist"><svg class="ic16"><use href="#i-redo"/></svg></span>
              <span class="live"><span class="check checked"></span>Actualización en vivo</span>
              <span class="btn apply">Aplicar</span>
            </div>
          </div>
        </div>

        <div class="dock-tabs right">
          <span class="dock-tab active">Estilo de capas</span>
          <span class="dock-tab">Caja de herramientas de Procesos</span>
        </div>
      </div>
    </div>

    <div class="statusbar">
      <div class="field locator"><svg class="ic14"><use href="#i-search"/></svg><span class="hint">Escriba para localizar (Ctrl+K)</span></div>
      <span class="st-coord">Coordenada</span>
      <div class="field st-box coord-box">-90.838,-0.494</div>
      <svg class="ic-mute"><use href="#i-mute"/></svg>
      <span class="st-scale">Escala</span>
      <div class="field st-box scale-box"><span class="grow">1:547670</span><span class="drop"><i class="arrow"></i></span></div>
      <svg class="ic-lock"><use href="#i-lock"/></svg>
      <span class="st-amp">Amplificador</span>
      <div class="field st-box amp-box"><span class="grow">100%</span><span class="spin"><i class="up"></i><i class="down"></i></span></div>
      <span class="st-rot">Rotación</span>
      <div class="field st-box rot-box"><span class="grow">0.0 °</span><span class="spin"><i class="up"></i><i class="down"></i></span></div>
      <span class="check checked st-check"></span>
      <span class="st-render">Representar</span>
      <svg class="ic-crs"><use href="#i-crs"/></svg>
      <span class="st-epsg">EPSG:4326</span>
      <svg class="ic-msg"><use href="#i-msg"/></svg>
    </div>
  </div>
</body>
</html>
```

FILE: styles.css
```css
* {
  box-sizing: border-box;
}

html, body {
  margin: 0;
  padding: 0;
}

body {
  width: 1364px;
  height: 768px;
  overflow: hidden;
  background: #f0f0f0;
  font-family: "Open Sans", "Liberation Sans", sans-serif;
  font-size: 12px;
  color: #2b2b2b;
}

.sprite {
  display: none;
}

.ictext {
  font-family: "Liberation Sans", sans-serif;
  font-size: 8px;
  font-weight: 700;
  fill: #222;
}

.window {
  display: flex;
  flex-direction: column;
  height: 768px;
}

.grow {
  flex: 1;
  min-width: 0;
}

/* barra de titulo */
.titlebar {
  display: flex;
  align-items: center;
  height: 23px;
  background: #fff;
  padding-left: 2px;
}

.app-logo {
  width: 18px;
  height: 18px;
}

.app-title {
  margin-left: 3px;
  color: #333;
  letter-spacing: -.37px;
}

.win-btns {
  display: flex;
  margin-left: auto;
  gap: 34px;
  margin-right: 19px;
}

.win-btns svg {
  width: 12px;
  height: 12px;
}

/* menu */
.menubar {
  display: flex;
  align-items: center;
  height: 20px;
  padding-left: 10px;
  background: #f0f0f0;
  color: #222;
}

.menubar span {
  white-space: nowrap;
}

.m1 { width: 63px; }
.m2 { width: 47px; }
.m3 { width: 34px; }
.m4 { width: 43px; }
.m5 { width: 92px; }
.m6 { width: 99px; }
.m7 { width: 64px; }
.m8 { width: 50px; }
.m9 { width: 94px; }
.m10 { width: 40px; }
.m11 { width: 44px; }
.m12 { width: 65px; }

/* barras de herramientas */
.toolbar {
  display: flex;
  align-items: center;
  height: 40px;
  padding-left: 5px;
  background: linear-gradient(#fafafa, #f1f1f1);
  border-top: 1px solid #d8d8d8;
  border-bottom: 1px solid #c4c4c4;
}

.toolbar.second {
  height: 39px;
  border-top: 0;
  border-bottom-color: #b8b8b8;
}

.grip {
  width: 5px;
  height: 18px;
  flex: none;
  background-image: radial-gradient(#c2c2c2 0.7px, transparent 0.8px);
  background-size: 2.500px 3px;
}

.g0 { margin-right: 2.500px; }
.g1 { margin: 0 6px 0 5px; }
.g2 { margin: 0 7px 0 7px; }
.g3 { margin: 0 5px 0 7px; }
.g4 { margin: 0 6px 0 7px; }
.g5 { margin: 0 5px 0 5px; }
.g6 { margin: 0 4px 0 6px; }
.g7 { margin: 0 5px 0 7px; }

.vline {
  width: 1px;
  height: 22px;
  flex: none;
  background: #d8d8d8;
}

.v1 { margin: 0 3px 0 3px; }
.v2 { margin: 0 0 0 3px; }
.v3 { margin: 0 4px 0 4px; }
.v4 { margin: 0 2px 0 3px; }

.ti {
  display: flex;
  align-items: center;
  justify-content: center;
  flex: none;
  width: 33px;
  height: 31px;
  gap: 5px;
}

.ti svg {
  width: 24px;
  height: 24px;
  flex: none;
}

.ti.on {
  background: #dcdcdc;
  border: 1px solid #b4b4b4;
  border-radius: 3px;
}

.ti.off svg {
  filter: grayscale(1) opacity(.38);
}

.w39 { width: 39px; justify-content: flex-start; padding-left: 4px; }
.w47 { width: 47px; justify-content: flex-start; padding-left: 4px; gap: 8px; }
.w44 { width: 44px; justify-content: flex-start; padding-left: 4px; }
.w44b { width: 44px; justify-content: flex-start; padding-left: 4px; gap: 8px; }
.w44c { width: 44px; justify-content: flex-start; padding-left: 6px; gap: 8px; }
.w45 { width: 45px; justify-content: flex-start; padding-left: 4px; }

.sigma {
  font-family: "Liberation Serif", serif;
  font-weight: 700;
  font-size: 27px;
  color: #8e1a8e;
}

.arrow {
  display: inline-block;
  flex: none;
  width: 0;
  height: 0;
  border-left: 4.500px solid transparent;
  border-right: 4.500px solid transparent;
  border-top: 4.500px solid #555;
}

.arrow.tiny {
  border-width: 3px 3px 0;
  margin: 12px 0 0 -6px;
}

.ti.off .arrow {
  border-top-color: #bbb;
}

/* zona central */
.main {
  display: flex;
  height: 616px;
}

.split-l {
  width: 6px;
}

.split-r {
  width: 4px;
}

.map {
  width: 654px;
  height: 616px;
}

.map svg {
  display: block;
}

.land path {
  fill: #bcd053;
  stroke: #5b6238;
  stroke-width: .8;
  stroke-linejoin: round;
}

.specks {
  fill: #555;
}

.pt-a circle, .pt-b circle, .pt-c circle {
  stroke: #3c3c3c;
  stroke-width: .7;
}

.pt-a { fill: #83e3b9; }
.pt-b { fill: #c9317b; }
.pt-c { fill: #c3cc1c; }

.map-labels text {
  font-family: "Liberation Sans", sans-serif;
  font-size: 29px;
  fill: #323232;
}

/* paneles */
.left-panel {
  display: flex;
  flex-direction: column;
  width: 229px;
}

.right-panel {
  display: flex;
  flex-direction: column;
  width: 471px;
}

.dock-head {
  display: flex;
  align-items: center;
  justify-content: space-between;
  height: 21px;
  padding: 0 2px 0 4px;
  flex: none;
}

.right-panel .dock-head {
  height: 23px;
  padding: 0 2px 2px 6px;
}

.dock-btns {
  display: flex;
  gap: 3px;
}

.dock-btns svg {
  width: 12px;
  height: 12px;
}

.left-panel .dock-btns {
  margin-right: 2px;
}

.layers-tools {
  display: flex;
  align-items: flex-start;
  height: 29px;
  padding: 2px 0 0 5px;
}

.lt {
  display: flex;
  align-items: center;
  justify-content: center;
  width: 25px;
  height: 23px;
  flex: none;
}

.lt svg {
  width: 18px;
  height: 18px;
}

.lt.on {
  width: 22px;
  margin-right: 3px;
  background: #dcdcdc;
  border: 1px solid #b4b4b4;
  border-radius: 3px;
}

.lt.wide {
  width: 36px;
  gap: 3px;
  margin-right: 0;
}

.lt.wide .arrow {
  border-width: 3.500px 3.500px 0;
}

.tree {
  height: 541px;
  margin: 0 1px 0 1px;
  background: #fff;
  border: 1px solid #c8c8c8;
}

.tree-row {
  display: flex;
  align-items: center;
  height: 18px;
}

.tree-row.sel {
  background: #f0f0f0;
}

.tree-row b {
  font-size: 13.200px;
  font-weight: 700;
  letter-spacing: .13px;
  white-space: nowrap;
  color: #222;
}

.cur {
  text-decoration: underline;
}

.tw {
  display: flex;
  align-items: center;
  justify-content: center;
  width: 22px;
  flex: none;
}

.tri-right {
  display: block;
  width: 0;
  height: 0;
  border-top: 4px solid transparent;
  border-bottom: 4px solid transparent;
  border-left: 4px solid #666;
}

.tri-right.dark {
  border-left-color: #222;
}

.tri-left {
  display: block;
  width: 0;
  height: 0;
  border-top: 4px solid transparent;
  border-bottom: 4px solid transparent;
  border-right: 4px solid #aaa;
}

.check {
  display: inline-block;
  position: relative;
  flex: none;
  width: 14px;
  height: 14px;
  background: #fff;
  border: 1px solid #9a9a9a;
  border-radius: 1px;
}

.check.checked::after {
  content: "";
  position: absolute;
  left: 4px;
  top: 0;
  width: 4px;
  height: 9px;
  border: solid #111;
  border-width: 0 2px 2px 0;
  transform: rotate(40deg);
}

.swatch {
  width: 16px;
  height: 16px;
  margin: 0 6px;
  flex: none;
  background: #bcd053;
  border: 1px solid #8a9a4a;
}

.pts {
  width: 16px;
  height: 16px;
  flex: none;
}

.tree-row .pts {
  margin: 0 6px;
}

.tbl-ic {
  width: 14px;
  height: 14px;
  margin: 0 6px 0 2px;
  flex: none;
}

.dock-tabs {
  display: flex;
  height: 25px;
  align-items: flex-start;
}

.dock-tab {
  display: flex;
  align-items: center;
  justify-content: center;
  height: 25px;
  padding: 0 10px;
  background: #dedede;
  border: 1px solid #bdbdbd;
  border-bottom-color: #c8c8c8;
  white-space: nowrap;
}

.dock-tab.active {
  height: 24px;
  padding: 0 14px;
  background: #fbfbfb;
  border-top: 0;
  border-radius: 0 0 3px 3px;
  box-shadow: 0 1px 1px #bbb;
}

.dock-tabs.right {
  height: 26px;
  margin-top: 4px;
  padding-left: 2px;
}

.dock-tabs.right .dock-tab {
  height: 24px;
  padding: 1px 14px 0;
  letter-spacing: .15px;
}

.dock-tabs.right .dock-tab.active {
  height: 26px;
  padding: 2px 11px 0;
  border-top: 1px solid #f0f0f0;
  letter-spacing: 0;
}

/* estilo */
.layer-combo {
  margin: 0 4px 0 5px;
  height: 22px;
  flex: none;
}

.layer-combo .pts {
  margin: 0 3px 0 1px;
}

.combo {
  display: flex;
  align-items: center;
  padding-left: 4px;
  padding-right: 6px;
  height: 22px;
  background: linear-gradient(#fdfdfd, #ededed);
  border: 1px solid #b4b4b4;
  border-radius: 3px;
}

.field {
  display: flex;
  align-items: center;
  padding-left: 3px;
  height: 22px;
  background: #fff;
  border: 1px solid #b4b4b4;
  border-radius: 3px;
  white-space: nowrap;
}

.field.focus {
  border-color: #5aa2e6;
}

.drop {
  display: flex;
  align-items: center;
  justify-content: center;
  align-self: stretch;
  width: 19px;
  flex: none;
  background: linear-gradient(#fdfdfd, #ededed);
  border-left: 1px solid #c8c8c8;
  border-radius: 0 3px 3px 0;
}

.spin {
  display: flex;
  flex-direction: column;
  align-items: center;
  justify-content: center;
  gap: 3px;
  align-self: stretch;
  width: 14px;
  flex: none;
  background: linear-gradient(#fdfdfd, #ededed);
  border-left: 1px solid #c8c8c8;
  border-radius: 0 3px 3px 0;
}

.up, .down {
  display: block;
  width: 0;
  height: 0;
  border-left: 4px solid transparent;
  border-right: 4px solid transparent;
}

.up {
  border-bottom: 4px solid #555;
}

.down {
  border-top: 4px solid #555;
}

.style-body {
  display: flex;
  height: 534px;
  margin-top: 7px;
  flex: none;
}

.strip {
  width: 37px;
  margin-left: 5px;
  margin-right: 4px;
  flex: none;
  background: #5e5e5e;
}

.strip-item {
  display: flex;
  align-items: center;
  justify-content: center;
  height: 32px;
  padding-right: 7px;
}

.strip-item.active {
  background: #f0f0f0;
  height: 31px;
  margin-top: 1px;
  padding-right: 0;
}

.strip-item svg {
  width: 24px;
  height: 24px;
}

.style-content {
  display: flex;
  flex-direction: column;
  width: 425px;
}

.top-row {
  display: flex;
  align-items: center;
  gap: 7px;
  height: 22px;
  margin: 1px 4px 7px 0;
  flex: none;
}

.btn {
  display: flex;
  align-items: center;
  justify-content: center;
  flex: none;
  background: linear-gradient(#fdfdfd, #ededed);
  border: 1px solid #b4b4b4;
  border-radius: 3px;
}

.square {
  width: 22px;
  height: 22px;
}

.eps {
  font-family: "Liberation Serif", serif;
  font-size: 18px;
  color: #6a3d7c;
}

.ic16 {
  width: 16px;
  height: 16px;
}

.ic14 {
  width: 14px;
  height: 14px;
  flex: none;
}

.ic20 {
  width: 20px;
  height: 20px;
  flex: none;
}

.mini-tag {
  width: 14px;
  height: 8px;
  margin: 0 4px 0 3px;
  flex: none;
}

.lbl-valor {
  width: 29px;
  flex: none;
}

.num {
  font-size: 9px;
  margin: 0 4px 0 1px;
  color: #444;
}

/* pestanas */
.tabs {
  display: flex;
  position: relative;
  height: 31px;
  margin-bottom: 10px;
  flex: none;
}

.tab {
  display: flex;
  align-items: center;
  justify-content: center;
  width: 48px;
  height: 29px;
  margin-top: 1px;
  flex: none;
  background: #e6e6e6;
  border: 1px solid #cfcfcf;
  border-left: 0;
}

.tab svg {
  width: 22px;
  height: 22px;
}

.tab.active {
  height: 31px;
  margin-top: -1px;
  background: #fff;
  border: 1px solid #cfcfcf;
  border-bottom: 0;
  border-radius: 3px 3px 0 0;
}

.tab-abc {
  font-family: "Liberation Sans", sans-serif;
  font-size: 10px;
  color: #333;
}

.tab.stub {
  width: 9px;
}

.tab-scroll {
  display: flex;
  align-items: center;
  justify-content: center;
  width: 15px;
  height: 31px;
  flex: none;
  background: #f4f4f4;
  border: 1px solid #c8c8c8;
  border-radius: 3px;
}

.pointer {
  position: absolute;
  left: 355px;
  top: 17px;
  width: 12px;
  height: 20px;
}

/* formulario */
.scroll-area {
  display: flex;
  height: 404px;
  flex: none;
}

.form {
  width: 408px;
  flex: none;
}

.sec-title {
  height: 20px;
  line-height: 19px;
}

.row {
  display: grid;
  grid-template-columns: 79px 286px 33px;
  align-items: center;
  height: 32px;
}

.row.first {
  margin-bottom: 6px;
}

.row label {
  white-space: nowrap;
}

.dd {
  width: 22px;
  height: 18px;
  margin-left: 11px;
  flex: none;
}

.font-btns {
  display: flex;
  align-items: center;
}

.font-btns .dd {
  margin-left: 10px;
  margin-right: 10px;
}

.fb {
  width: 23px;
  height: 23px;
}

.fb.off {
  color: #aaa;
  background: #f0f0f0;
  border-color: #ccc;
}

.second-group {
  margin-left: 66px;
}

.color-btn {
  display: flex;
  height: 22px;
}

.color-fill {
  display: block;
  flex: 1;
  background: #333;
  border-radius: 3px;
  border: 1px solid #b4b4b4;
  box-shadow: inset 0 0 0 3px #f4f4f4;
}

.color-drop {
  display: flex;
  align-items: center;
  justify-content: center;
  width: 12px;
  background: linear-gradient(#fdfdfd, #ededed);
  border: 1px solid #b4b4b4;
  border-radius: 0 3px 3px 0;
}

.color-drop .arrow {
  border-width: 4px 3.500px 0;
}

.opacity {
  display: flex;
  align-items: center;
}

.slider {
  display: flex;
  align-items: center;
  width: 183px;
  margin-right: 5px;
}

.slider-line {
  display: block;
  flex: 1;
  height: 4px;
  background: #2f80cc;
  border-radius: 2px;
  box-shadow: 0 0 0 1px #9fc1e2;
}

.slider-knob {
  display: block;
  width: 13px;
  height: 13px;
  background: #f8f8f8;
  border: 1px solid #b4b4b4;
  border-radius: 3px;
}

.spinbox {
  width: 98px;
}

.spinbox .up {
  border-bottom-color: #aaa;
}

.spinbox .down {
  border-top-color: #aaa;
}

.html-row {
  display: flex;
  align-items: center;
  gap: 5px;
  height: 18px;
  margin-top: 5px;
}

.fav-row {
  display: flex;
  align-items: center;
  height: 22px;
  margin-top: 15px;
}

.fav {
  width: 371px;
  flex: none;
  padding-left: 10px;
}

.fav .ic14 {
  margin-right: 5px;
}

.clear {
  width: 14px;
  height: 11px;
  margin-right: 6px;
  flex: none;
}

.fav-row .ic20 {
  margin-left: 10px;
}

.fav-list {
  display: flex;
  height: 88px;
  margin-top: 5px;
  width: 402px;
  background: #fff;
  border: 1px solid #c8c8c8;
  border-bottom: 0;
  overflow: hidden;
}

.fav-items {
  flex: 1;
  padding: 2px 0 0 17px;
}

.card {
  display: flex;
  align-items: center;
  justify-content: center;
  width: 90px;
  height: 81px;
  border: 1px solid #d0d0d0;
  border-radius: 6px;
  font-family: "Liberation Sans", sans-serif;
  font-size: 12px;
  color: #666;
}

.vscroll {
  display: flex;
  flex-direction: column;
  width: 16px;
  background: #f2f2f2;
  border-left: 1px solid #d0d0d0;
  flex: none;
}

.scroll-area > .vscroll {
  margin-left: -1px;
}

.sb-btn {
  display: flex;
  align-items: center;
  justify-content: center;
  height: 14px;
  flex: none;
}

.sb-track {
  display: flex;
  flex-direction: column;
  justify-content: flex-end;
  flex: 1;
}

.sb-thumb {
  display: block;
  height: 28px;
  background: #e0e0e0;
  border-top: 1px solid #cfcfcf;
}

.vscroll .up {
  border-bottom-color: #444;
}

.vscroll .down {
  border-top-color: #444;
}

.footer-row {
  display: flex;
  align-items: center;
  height: 23px;
  margin-top: 5px;
  flex: none;
}

.hist {
  width: 23px;
  height: 23px;
  margin-right: 7px;
}

.hist svg {
  width: 14px;
  height: 14px;
}

.live {
  display: flex;
  align-items: center;
  gap: 5px;
  margin-left: 134px;
  white-space: nowrap;
}

.apply {
  width: 79px;
  height: 22px;
  margin-left: auto;
  margin-right: 4px;
}

/* barra de estado */
.statusbar {
  display: flex;
  align-items: center;
  height: 30px;
  padding: 2px 0 0 3px;
  white-space: nowrap;
}

.st-box {
  height: 24px;
  flex: none;
}

.locator {
  width: 253px;
  height: 24px;
  padding-left: 5px;
  flex: none;
}

.locator .ic14 {
  margin-right: 10px;
}

.hint {
  color: #777;
  letter-spacing: .2px;
}

.st-coord { margin-left: 195px; width: 67px; }
.coord-box { width: 92px; margin-left: 5px; letter-spacing: .4px; }
.ic-mute { width: 16px; height: 18px; margin-left: 10px; flex: none; }
.st-scale { margin-left: 14px; width: 35px; }
.scale-box { width: 92px; margin-left: 4px; }
.ic-lock { width: 13px; height: 15px; margin-left: 9px; flex: none; }
.st-amp { margin-left: 9px; width: 70px; }
.amp-box { width: 83px; margin-left: 4px; }
.st-rot { margin-left: 10px; width: 48px; }
.rot-box { width: 83px; margin-left: 10px; }
.st-check { margin-left: 7px; }
.st-render { margin-left: 5px; width: 70px; }
.ic-crs { width: 16px; height: 16px; margin-left: 14px; flex: none; }
.st-epsg { margin-left: 3px; width: 62px; }
.ic-msg { width: 18px; height: 18px; margin-left: 24px; flex: none; }
```
